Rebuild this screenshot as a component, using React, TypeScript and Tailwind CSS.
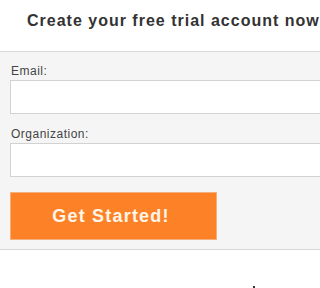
export default function App() {
  return (
    <div className="h-[288px] w-full overflow-hidden bg-white font-['Liberation_Sans',Arial,sans-serif]">
      <div className="pt-[11px] pb-[20px] pl-[27px] whitespace-nowrap">
        <h1 className="text-[16px] leading-5 font-bold tracking-[1px] text-[#333]">
          Create your free trial account now
        </h1>
      </div>

      <form className="w-[560px] border-y border-[#d9d9d9] bg-[#f5f5f5] pt-3 pb-[9px] pl-[10px]">
        <label className="block pl-px text-[12px] leading-[14px] tracking-[0.5px] text-[#444]">Email:</label>
        <input
          type="text"
          className="mt-[2px] block h-[34px] w-[520px] border border-[#d2d2d2] bg-white outline-none"
        />

        <label className="mt-[13px] block pl-px text-[12px] leading-[14px] tracking-[0.5px] text-[#444]">
          Organization:
        </label>
        <input
          type="text"
          className="mt-[2px] block h-[34px] w-[520px] border border-[#d2d2d2] bg-white outline-none"
        />

        <button
          type="button"
          className="mt-[15px] flex h-[48px] w-[207px] items-center justify-center border border-[#f3b07a] bg-[#fd8227] pr-[5px] text-[18px] font-bold tracking-[1.2px] text-[#fff6ea]"
        >
          Get Started!
        </button>
      </form>

      <div className="flex pt-[36px] pl-[253px]">
        <span className="h-[3px] w-[2px] bg-[#333]" />
      </div>
    </div>
  );
}
